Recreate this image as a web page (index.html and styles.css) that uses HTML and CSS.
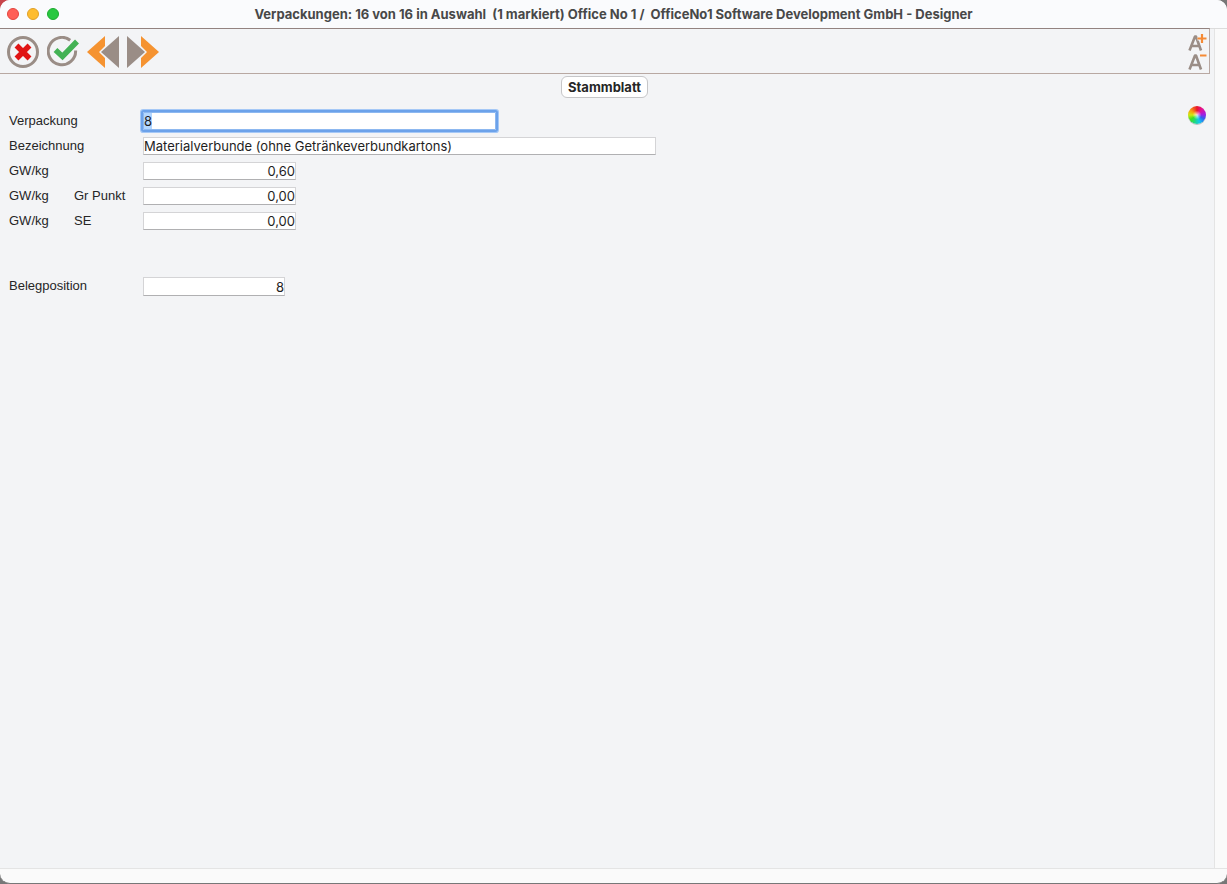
FILE: index.html
```html
<!DOCTYPE html>
<html lang="de">
<head>
    <meta charset="utf-8">
    <title>Verpackungen</title>
    <link rel="stylesheet" href="styles.css">
</head>
<body>
    <div class="window">
        <header class="titlebar">
            <div class="lights">
                <button class="light close" aria-label="Schließen"></button>
                <button class="light minimize" aria-label="Minimieren"></button>
                <button class="light zoom" aria-label="Zoomen"></button>
            </div>
            <h1>Verpackungen: 16 von 16 in Auswahl&nbsp; (1 markiert) Office No 1 /&nbsp; OfficeNo1 Software Development GmbH - Designer</h1>
        </header>
        <div class="body">
            <main class="content">
                <div class="toolbar">
                    <button class="tool" aria-label="Abbrechen">
                        <svg width="32" height="32" viewBox="0 0 32 32">
                            <circle cx="16" cy="16" r="14.5" fill="none" stroke="#9a8d86" stroke-width="3"/>
                            <path d="M9.5 9.5L22.5 22.5M22.5 9.5L9.5 22.5" stroke="#e01414" stroke-width="5.5"/>
                        </svg>
                    </button>
                    <button class="tool" aria-label="Sichern">
                        <svg width="32" height="32" viewBox="0 0 32 32">
                            <path d="M23.2 4.2A13.7 13.7 0 1 0 28.6 14.5" fill="none" stroke="#9a8d86" stroke-width="3"/>
                            <path d="M8.5 14L15.5 20.5L30 5.500" fill="none" stroke="#43b255" stroke-width="5.5"/>
                        </svg>
                    </button>
                    <button class="tool" aria-label="Zurück">
                        <svg width="32" height="32" viewBox="0 0 32 32">
                            <path d="M18 0V10L12 16L18 22V32L0 16Z" fill="#f59331"/>
                            <path d="M32 0V32L14 16Z" fill="#9a8d86"/>
                        </svg>
                    </button>
                    <button class="tool" aria-label="Weiter">
                        <svg width="32" height="32" viewBox="0 0 32 32">
                            <path d="M14 0V10L20 16L14 22V32L32 16Z" fill="#f59331"/>
                            <path d="M0 0V32L18 16Z" fill="#9a8d86"/>
                        </svg>
                    </button>
                    <div class="font-size">
                        <button class="tool" aria-label="Schrift größer">
                            <svg width="20" height="19" viewBox="0 0 20 19">
                                <path d="M2.500 17.500L8 3.500H9L14 17.500M5 13H12" fill="none" stroke="#9a8d86" stroke-width="2.600" stroke-linejoin="round"/>
                                <path d="M15 1V10M10.500 5.500H19.500" stroke="#f3f4f6" stroke-width="4"/>
                                <path d="M15 1V10M10.500 5.500H19.500" stroke="#f58a35" stroke-width="2.200"/>
                            </svg>
                        </button>
                        <button class="tool" aria-label="Schrift kleiner">
                            <svg width="20" height="19" viewBox="0 0 20 19">
                                <path d="M2.500 17.500L8 3.500H9L14 17.500M5 13H12" fill="none" stroke="#9a8d86" stroke-width="2.600" stroke-linejoin="round"/>
                                <path d="M13 3.500H19.500" stroke="#f58a35" stroke-width="1.800"/>
                            </svg>
                        </button>
                    </div>
                </div>
                <nav class="tabs">
                    <button class="tab">Stammblatt</button>
                </nav>
                <div class="sheet">
                    <form class="fields">
                        <label class="caption" for="verpackung">Verpackung</label>
                        <input class="key" id="verpackung" type="text" value="8">

                        <label class="caption" for="bezeichnung">Bezeichnung</label>
                        <input class="wide" id="bezeichnung" type="text" value="Materialverbunde (ohne Getränkeverbundkartons)">

                        <label class="caption" for="gw">GW/kg</label>
                        <input class="number" id="gw" type="text" value="0,60">

                        <label class="caption" for="gw-punkt"><span>GW/kg</span><span>Gr Punkt</span></label>
                        <input class="number" id="gw-punkt" type="text" value="0,00">

                        <label class="caption" for="gw-se"><span>GW/kg</span><span>SE</span></label>
                        <input class="number" id="gw-se" type="text" value="0,00">

                        <label class="caption spaced" for="beleg">Belegposition</label>
                        <input class="number short spaced" id="beleg" type="text" value="8">
                    </form>
                    <button class="colors" aria-label="Farben"></button>
                </div>
            </main>
            <div class="scroll-side"></div>
        </div>
        <footer class="scroll-bottom"></footer>
    </div>
    <script src="script.js"></script>
</body>
</html>
```
FILE: styles.css
```css
* {
    box-sizing: border-box;
}

body {
    margin: 0;
    background: radial-gradient(circle at top left, #c8454b 12px, #777777 13px);
    font-family: "Liberation Sans", Arial, sans-serif;
    font-size: 13px;
    color: #262626;
}

button {
    padding: 0;
    border: none;
    background: none;
}

.window {
    display: flex;
    flex-direction: column;
    height: 100vh;
    border-bottom: 1px solid #777777;
    border-radius: 10px;
    background-color: #fafafa;
    overflow: hidden;
}

/* title bar */
.titlebar {
    position: relative;
    display: flex;
    align-items: center;
    justify-content: center;
    height: 28px;
    background-color: #fafbfd;
}

.titlebar h1 {
    margin: 0;
    font-family: Inter, sans-serif;
    font-size: 13px;
    font-weight: 700;
    color: #484848;
    white-space: nowrap;
}

.lights {
    position: absolute;
    left: 7px;
    display: flex;
    gap: 8px;
}

.light {
    width: 12px;
    height: 12px;
    border-radius: 50%;
}

.close {
    background-color: #ff5f57;
    border: 1px solid #e2463f;
}

.minimize {
    background-color: #febc2e;
    border: 1px solid #e0a028;
}

.zoom {
    background-color: #28c840;
    border: 1px solid #1dab30;
}

.body {
    display: flex;
    flex: 1;
    border-top: 1px solid #dcdcdc;
}

.content {
    flex: 1;
    background-color: #f3f4f6;
}

.scroll-side {
    width: 13px;
    border-left: 1px solid #e4e4e4;
}

.scroll-bottom {
    height: 15px;
    border-top: 1px solid #e4e4e4;
}

/* toolbar */
.toolbar {
    display: flex;
    align-items: center;
    gap: 8px;
    height: 46px;
    margin-top: -1px;
    margin-right: 4px;
    padding-top: 2px;
    padding-left: 7px;
    border: 1px solid #b8a8a2;
    border-top-color: #938380;
    border-left: none;
}

.tool svg {
    display: block;
}

.font-size {
    display: flex;
    flex-direction: column;
    margin-left: auto;
    margin-right: 2px;
}

.tabs {
    display: flex;
    justify-content: center;
    padding-top: 2px;
    padding-right: 5px;
}

.tab {
    height: 22px;
    padding: 0 6px;
    border: 1px solid #c6c6c8;
    border-radius: 6px;
    background-color: #ffffff;
    font-family: Inter, sans-serif;
    font-size: 13px;
    font-weight: 700;
    color: #262626;
}

/* form */
.sheet {
    display: flex;
    justify-content: space-between;
    align-items: flex-start;
    padding: 8px 8px 0 9px;
}

.fields {
    display: grid;
    grid-template-columns: 134px auto;
    row-gap: 7px;
    padding-top: 6px;
}

.caption {
    display: flex;
    line-height: 18px;
}

.caption span:first-child {
    width: 65px;
}

.fields input {
    height: 18px;
    padding: 0;
    border: 1px solid #d4d4d6;
    border-bottom-color: #b0b0b2;
    background-color: #ffffff;
    font-family: Inter, sans-serif;
    font-size: 13px;
    color: #1e1e1e;
    outline: none;
}

.fields .key {
    width: 353px;
    padding-left: 1px;
    border: none;
    box-shadow: 0 0 0 2px #6ca2ea, 0 0 0 3px #a5c8f6, inset 0 0 0 1px #8db8f0;
    border-radius: 1px;
}

.fields .wide {
    width: 513px;
}

.fields .number {
    width: 153px;
    text-align: right;
}

.fields .short {
    width: 142px;
    height: 19px;
}

.fields .spaced {
    margin-top: 40px;
}

.fields input::selection {
    background-color: #b3d7ff;
    color: #1e1e1e;
}

.colors {
    width: 18px;
    height: 18px;
    border-radius: 50%;
    background: radial-gradient(circle, rgba(255, 255, 255, 0.8) 0, rgba(255, 255, 255, 0) 35%), conic-gradient(#e8182c, #e010a0 45deg, #a020e0 85deg, #3060f0 120deg, #10c8f0 160deg, #20d880 200deg, #40e020 235deg, #d0e810 270deg, #f8a010 305deg, #e8182c);
    box-shadow: 0 1px 0 #b8c0c0;
}
```
FILE: script.js
```javascript
// the key field starts focused with its value selected
document.getElementById('verpackung').select();
```
